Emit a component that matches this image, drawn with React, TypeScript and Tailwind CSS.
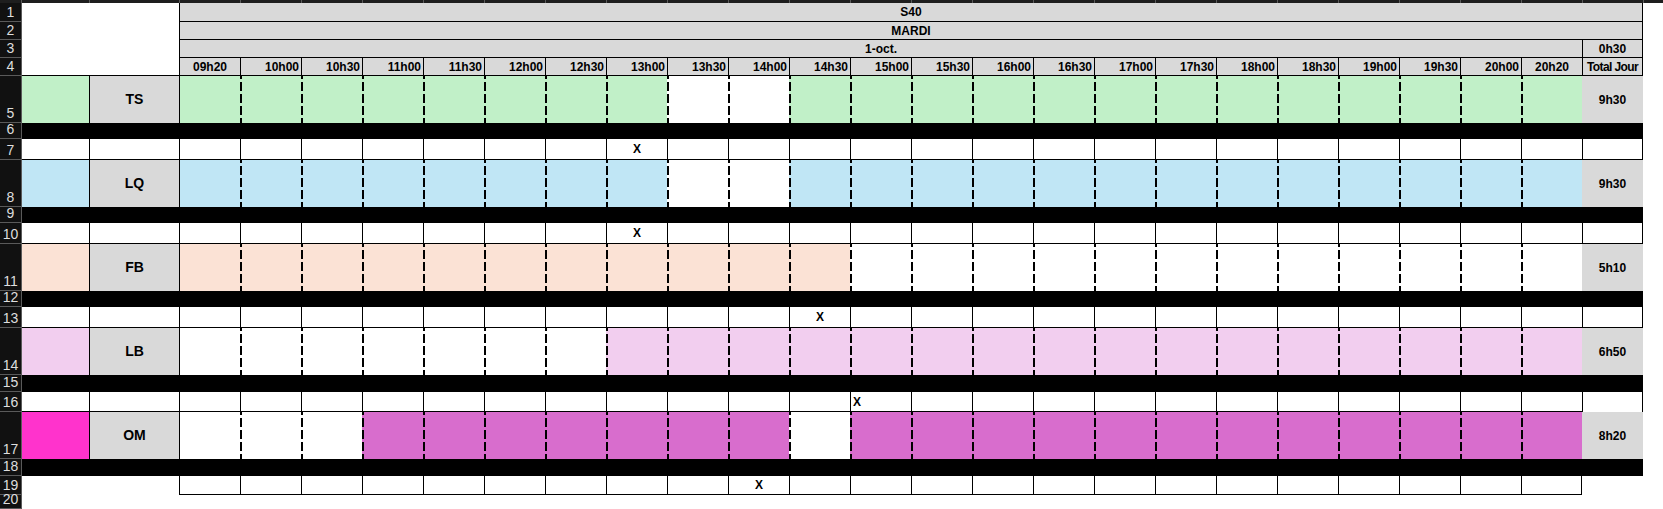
const FONT = "font-['Liberation_Sans',Arial,sans-serif]";

const DASH =
  "bg-[repeating-linear-gradient(to_bottom,#000_0_3px,transparent_3px_6px,#000_6px_12px)] bg-[length:2px_100%] bg-no-repeat";

const times = [
  "09h20", "10h00", "10h30", "11h00", "11h30", "12h00", "12h30", "13h00",
  "13h30", "14h00", "14h30", "15h00", "15h30", "16h00", "16h30", "17h00",
  "17h30", "18h00", "18h30", "19h00", "19h30", "20h00", "20h20",
];

type Block = {
  row: number;
  name: string;
  total: string;
  colA: string;
  bg: string;
  on: (i: number) => boolean;
  mark: number;
  markLeft?: boolean;
  blackH: string;
  smallH: string;
};

const blocks: Block[] = [
  { row: 5, name: "TS", total: "9h30", colA: "bg-[#c1f0c8]", bg: "bg-[#c1f0c8]", on: (i) => i !== 8 && i !== 9, mark: 7, blackH: "h-[16px]", smallH: "h-[21px]" },
  { row: 8, name: "LQ", total: "9h30", colA: "bg-[#c0e6f5]", bg: "bg-[#c0e6f5]", on: (i) => i !== 8 && i !== 9, mark: 7, blackH: "h-[16px]", smallH: "h-[21px]" },
  { row: 11, name: "FB", total: "5h10", colA: "bg-[#fbe2d5]", bg: "bg-[#fbe2d5]", on: (i) => i <= 10, mark: 10, blackH: "h-[16px]", smallH: "h-[21px]" },
  { row: 14, name: "LB", total: "6h50", colA: "bg-[#f2ceef]", bg: "bg-[#f2ceef]", on: (i) => i >= 7, mark: 11, markLeft: true, blackH: "h-[17px]", smallH: "h-[20px]" },
  { row: 17, name: "OM", total: "8h20", colA: "bg-[#ff33cc]", bg: "bg-[#d86dcd]", on: (i) => (i >= 3 && i <= 9) || i >= 11, mark: 9, blackH: "h-[17px]", smallH: "h-[19px]" },
];

function RowNum({ n }: { n: number }) {
  return (
    <div className="flex w-[22px] shrink-0 items-end justify-center border-r border-b border-[#5a5a5a] bg-[#111111] pb-[1px] text-[14px] leading-[15px] text-[#dedede]">
      {n}
    </div>
  );
}

function ColoredRow({ b }: { b: Block }) {
  return (
    <div className="flex h-[47px]">
      <RowNum n={b.row} />
      <div className={`w-[67px] shrink-0 ${b.colA}`} />
      <div className="flex w-[90px] shrink-0 items-center justify-center border-l border-black bg-[#d9d9d9] text-[14px] font-bold">
        {b.name}
      </div>
      {times.map((t, i) => (
        <div
          key={t}
          className={`w-[61px] shrink-0 ${i === 0 ? "border-l border-black" : DASH} ${b.on(i) ? b.bg : "bg-white"}`}
        />
      ))}
      <div className="flex w-[61px] shrink-0 items-center justify-center bg-[#d9d9d9] text-[12px] font-bold">
        {b.total}
      </div>
    </div>
  );
}

function BlackRow({ n, h }: { n: number; h: string }) {
  return (
    <div className={`flex ${h}`}>
      <RowNum n={n} />
      <div className="w-[1621px] shrink-0 bg-black" />
    </div>
  );
}

function SmallRow({ b }: { b: Block }) {
  const last = b.row === 17;
  if (last) {
    return (
      <div className={`flex ${b.smallH}`}>
        <RowNum n={b.row + 2} />
        <div className="w-[157px] shrink-0" />
        {times.map((t, i) => (
          <div
            key={t}
            className={`flex w-[61px] shrink-0 items-center justify-center border-l border-b border-black text-[12px] font-bold ${i === times.length - 1 ? "border-r" : ""}`}
          >
            {i === b.mark ? "X" : ""}
          </div>
        ))}
      </div>
    );
  }
  return (
    <div className={`flex ${b.smallH}`}>
      <RowNum n={b.row + 2} />
      <div className="w-[67px] shrink-0 border-b border-black" />
      <div className="w-[90px] shrink-0 border-l border-b border-black" />
      {times.map((t, i) => (
        <div
          key={t}
          className={`flex w-[61px] shrink-0 items-center border-l border-b border-black text-[12px] font-bold ${i === b.mark && b.markLeft ? "justify-start pl-[2px]" : "justify-center"}`}
        >
          {i === b.mark ? "X" : ""}
        </div>
      ))}
      <div className={`w-[61px] shrink-0 border-x border-black ${b.markLeft ? "" : "border-b"}`} />
    </div>
  );
}

export default function App() {
  return (
    <div className={`h-[509px] w-[1663px] overflow-hidden bg-white text-black ${FONT}`}>
      {/* column header strip, cut off */}
      <div className="flex h-[3px] bg-[#1e1e1e]">
        <div className="w-[21px] shrink-0" />
        <div className="w-[68px] shrink-0 border-l border-[#5a5a5a]" />
        <div className="w-[90px] shrink-0 border-l border-[#5a5a5a]" />
        {times.map((t) => (
          <div key={t} className="w-[61px] shrink-0 border-l border-[#5a5a5a]" />
        ))}
        <div className="w-[61px] shrink-0 border-l border-[#5a5a5a]" />
        <div className="flex-1 border-l border-[#5a5a5a]" />
      </div>

      <div className="flex h-[19px]">
        <RowNum n={1} />
        <div className="w-[157px] shrink-0" />
        <div className="flex w-[1464px] shrink-0 items-center justify-center border-x border-b border-black bg-[#d9d9d9] text-[12px] font-bold">
          S40
        </div>
      </div>
      <div className="flex h-[18px]">
        <RowNum n={2} />
        <div className="w-[157px] shrink-0" />
        <div className="flex w-[1464px] shrink-0 items-center justify-center border-x border-b border-black bg-[#d9d9d9] text-[12px] font-bold">
          MARDI
        </div>
      </div>
      <div className="flex h-[18px]">
        <RowNum n={3} />
        <div className="w-[157px] shrink-0" />
        <div className="flex w-[1403px] shrink-0 items-center justify-center border-l border-b border-black bg-[#d9d9d9] text-[12px] font-bold">
          1-oct.
        </div>
        <div className="flex w-[61px] shrink-0 items-center justify-center border-x border-b border-black bg-[#d9d9d9] text-[12px] font-bold">
          0h30
        </div>
      </div>
      <div className="flex h-[18px]">
        <RowNum n={4} />
        <div className="w-[157px] shrink-0 border-b border-black" />
        {times.map((t, i) => (
          <div
            key={t}
            className={`flex w-[61px] shrink-0 items-center border-l border-b border-black bg-[#d9d9d9] text-[12px] font-bold ${i === 0 || i === times.length - 1 ? "justify-center" : "justify-end pr-[2px]"}`}
          >
            {t}
          </div>
        ))}
        <div className="flex w-[61px] shrink-0 items-center justify-center border-x border-b border-black bg-[#d9d9d9] text-[12px] font-bold tracking-[-0.6px]">
          Total Jour
        </div>
      </div>

      {blocks.map((b) => (
        <div key={b.name}>
          <ColoredRow b={b} />
          <BlackRow n={b.row + 1} h={b.blackH} />
          <SmallRow b={b} />
        </div>
      ))}

      <div className="flex h-[14px]">
        <RowNum n={20} />
      </div>
    </div>
  );
}
